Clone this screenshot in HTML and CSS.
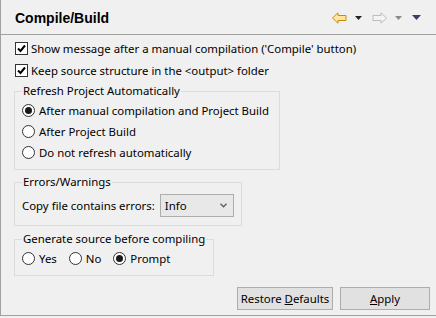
FILE: index.html
```html
<!DOCTYPE html>
<html lang="en">
<head>
    <meta charset="UTF-8">
    <title>Compile/Build</title>
    <link rel="stylesheet" href="styles.css">
</head>
<body>
    <div class="page">
        <!-- title bar with history arrows -->
        <div class="title-bar">
            <h1>Compile/Build</h1>
            <div class="nav">
                <svg class="arrow" width="15" height="12" viewBox="0 0 15 12">
                    <path d="M0.5 6 L6 0.8 V3.5 H14 V8.5 H6 V11.2 Z" fill="#ffe7a0" stroke="#c88a0c" stroke-width="1"/>
                </svg>
                <svg class="tri" width="7" height="4" viewBox="0 0 7 4"><path d="M0 0 H7 L3.5 4 Z" fill="#222"/></svg>
                <svg class="arrow fwd" width="15" height="12" viewBox="0 0 15 12">
                    <path d="M14.5 6 L9 0.8 V3.5 H1 V8.5 H9 V11.2 Z" fill="#f4f4f4" stroke="#bdbdbd" stroke-width="1"/>
                </svg>
                <svg class="tri" width="7" height="4" viewBox="0 0 7 4"><path d="M0 0 H7 L3.5 4 Z" fill="#8a8a8a"/></svg>
                <svg class="tri menu" width="9" height="5" viewBox="0 0 9 5"><path d="M0 0 H9 L4.5 5 Z" fill="#3c3c6a"/></svg>
            </div>
        </div>

        <div class="content">
            <div class="check-row">
                <span class="box checked"><svg width="11" height="11" viewBox="0 0 11 11"><path d="M2 5.5 L4.5 8 L9 2.5" fill="none" stroke="#000" stroke-width="2"/></svg></span>
                Show message after a manual compilation ('Compile' button)
            </div>
            <div class="check-row">
                <span class="box checked"><svg width="11" height="11" viewBox="0 0 11 11"><path d="M2 5.5 L4.5 8 L9 2.5" fill="none" stroke="#000" stroke-width="2"/></svg></span>
                Keep source structure in the &lt;output&gt; folder
            </div>

            <!-- refresh options -->
            <fieldset class="group refresh">
                <legend>Refresh Project Automatically</legend>
                <div class="radio-row"><span class="radio on"></span>After manual compilation and Project Build</div>
                <div class="radio-row"><span class="radio"></span>After Project Build</div>
                <div class="radio-row"><span class="radio"></span>Do not refresh automatically</div>
            </fieldset>

            <!-- errors -->
            <fieldset class="group errors">
                <legend>Errors/Warnings</legend>
                <div class="field-row">
                    <span>Copy file contains errors:</span>
                    <div class="combo">
                        <span>Info</span>
                        <svg width="7" height="5" viewBox="0 0 7 5"><path d="M0.5 0.8 L3.5 3.8 L6.5 0.8" fill="none" stroke="#606060" stroke-width="1.4"/></svg>
                    </div>
                </div>
            </fieldset>

            <!-- generate source -->
            <fieldset class="group generate">
                <legend>Generate source before compiling</legend>
                <div class="inline-radios">
                    <div class="radio-row"><span class="radio"></span>Yes</div>
                    <div class="radio-row"><span class="radio"></span>No</div>
                    <div class="radio-row"><span class="radio on"></span>Prompt</div>
                </div>
            </fieldset>
        </div>

        <div class="buttons">
            <button type="button" class="restore">Restore <u>D</u>efaults</button>
            <button type="button" class="apply"><u>A</u>pply</button>
        </div>
    </div>
</body>
</html>
```

FILE: styles.css
```css
body {
    margin: 0;
    background-color: #f0f0f0;
    font-family: "Noto Sans", "Open Sans", sans-serif;
    font-size: 11.4px;
    color: #000;
    white-space: nowrap;
}

.page {
    height: 316px;
    box-sizing: border-box;
    border-left: 1px solid #a0a0a0;
    border-bottom: 1px solid #a0a0a0;
    display: flex;
    flex-direction: column;
}

.title-bar {
    flex-shrink: 0;
    height: 35px;
    box-sizing: border-box;
    border-bottom: 1px solid #a0a0a0;
    display: flex;
    align-items: center;
    padding: 1px 15px 0 14px;
}

h1 {
    flex: 1;
    margin: 0;
    font: bold 14px "Liberation Sans", Arial, sans-serif;
    color: #000;
}

.nav {
    display: flex;
    align-items: center;
}

.nav .tri {
    margin-left: 8px;
}

.nav .fwd,
.nav .menu {
    margin-left: 10px;
}

.content {
    flex: 1;
    min-height: 0;
    padding: 2px 0 0 13px;
}

.check-row {
    height: 22px;
    display: flex;
    align-items: center;
    gap: 3px;
    margin-left: 1px;
}

.box {
    width: 13px;
    height: 13px;
    box-sizing: border-box;
    border: 1px solid #333;
    background-color: #fff;
    display: flex;
    align-items: center;
    justify-content: center;
}

.group {
    margin: 0;
    border: 1px solid #dcdcdc;
    box-sizing: border-box;
    padding: 1px 7px 6px 7px;
}

.group legend {
    padding: 0 1px;
    line-height: 16px;
}

.refresh {
    width: 266px;
    margin-top: 2px;
}

.errors {
    width: 227px;
    margin-top: 4px;
    padding-top: 4px;
    padding-bottom: 8px;
}

.generate {
    width: 197px;
    margin-top: 5px;
    padding-bottom: 6px;
}

.radio-row {
    height: 21px;
    display: flex;
    align-items: center;
    gap: 4px;
}

.radio {
    width: 13px;
    height: 13px;
    box-sizing: border-box;
    border: 1px solid #333;
    border-radius: 50%;
    background-color: #fff;
    display: flex;
    align-items: center;
    justify-content: center;
}

.radio.on::after {
    content: "";
    width: 7px;
    height: 7px;
    border-radius: 50%;
    background-color: #1a1a1a;
}

.inline-radios {
    display: flex;
    gap: 12px;
}

.field-row {
    display: flex;
    align-items: center;
    gap: 5px;
}

.combo {
    width: 74px;
    height: 23px;
    box-sizing: border-box;
    border: 1px solid #adadad;
    background-color: #e8e8e8;
    display: flex;
    align-items: center;
    justify-content: space-between;
    padding: 0 6px 0 4px;
}

.buttons {
    flex-shrink: 0;
    display: flex;
    justify-content: flex-end;
    gap: 7px;
    padding: 0 6px 5px 0;
}

button {
    height: 23px;
    padding: 0;
    font-family: inherit;
    font-size: 11.4px;
    color: #000;
    background-color: #e1e1e1;
    border: 1px solid #adadad;
}

.restore {
    width: 96px;
}

.apply {
    width: 90px;
}
```
